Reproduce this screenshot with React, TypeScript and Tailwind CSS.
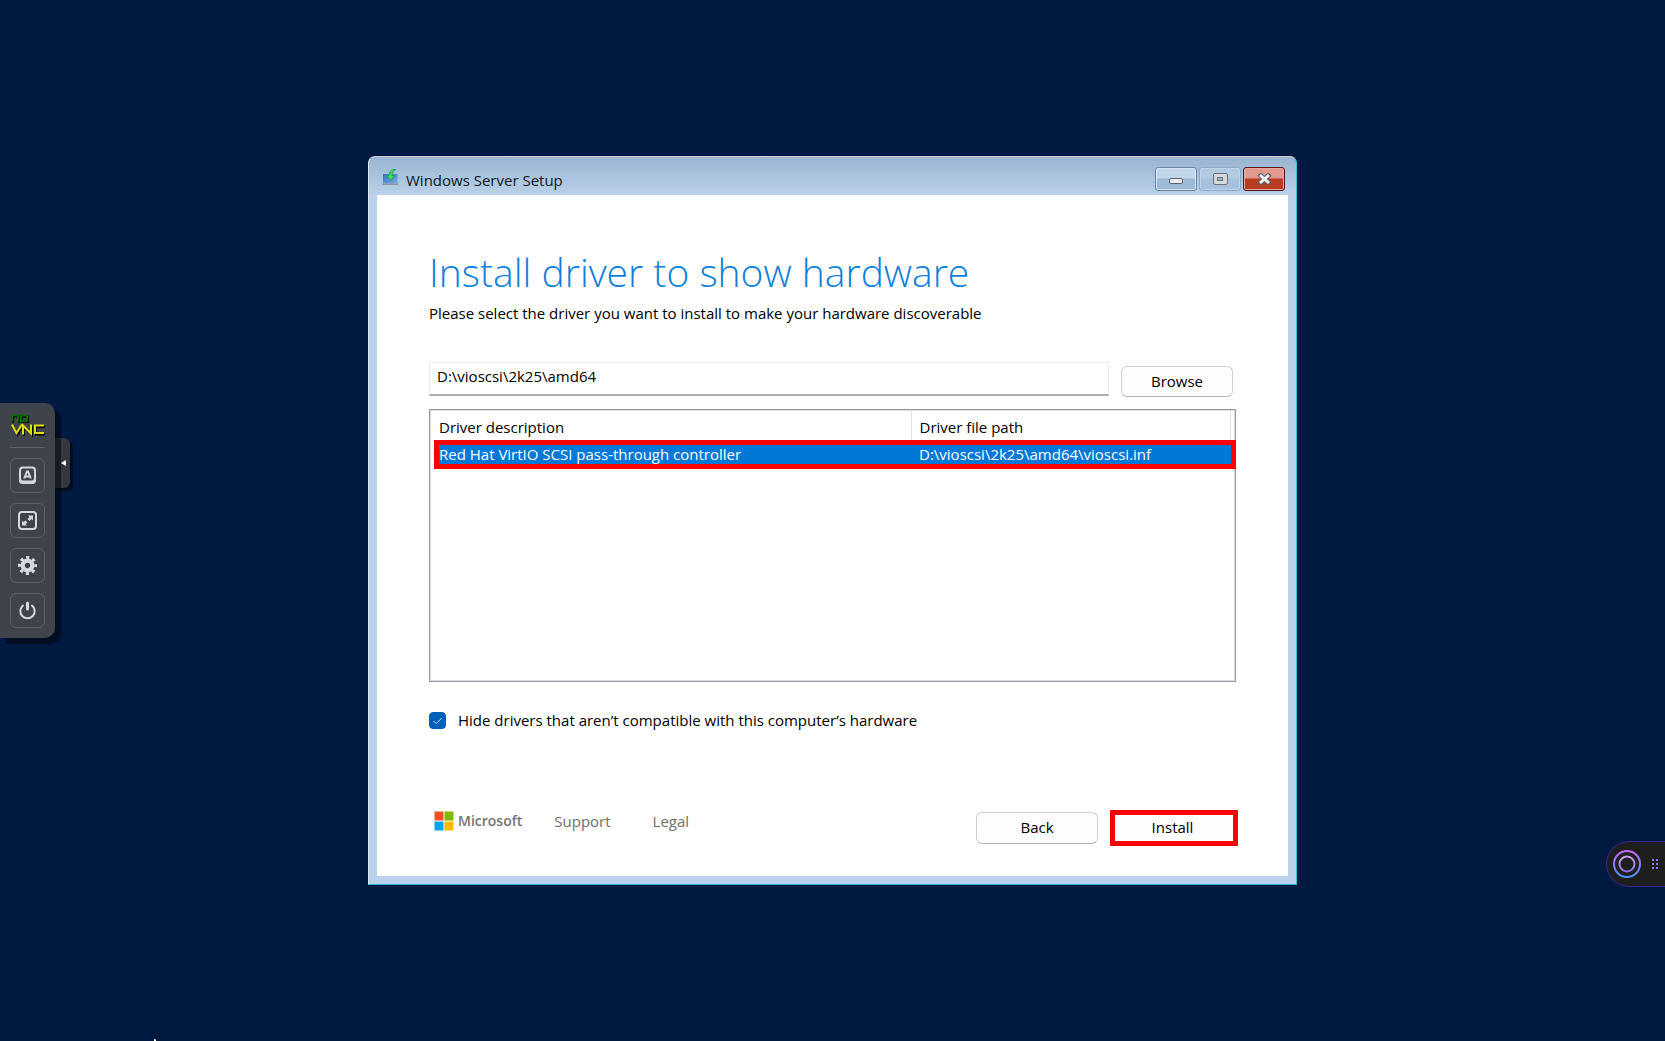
import type { ReactNode } from "react";

const drivers = [
  {
    description: "Red Hat VirtIO SCSI pass-through controller",
    path: "D:\\vioscsi\\2k25\\amd64\\vioscsi.inf",
  },
];

function VncButton({ label, children }: { label: string; children: ReactNode }) {
  return (
    <button
      type="button"
      aria-label={label}
      className="flex size-[35px] items-center justify-center rounded-md border border-[#5d6068]"
    >
      {children}
    </button>
  );
}

function VncBar() {
  return (
    <aside className="fixed top-1/2 left-0 flex -translate-y-1/2 items-start pb-px">
      <div className="relative z-10 flex flex-col items-center gap-[10px] rounded-r-[10px] bg-[#3f434c] p-[10px] shadow-[6px_6px_0_rgba(0,0,0,0.5)]">
        <svg width="35" height="24" viewBox="0 0 35 24" fill="none" role="img" aria-label="noVNC">
          <g strokeWidth="2">
            <path d="M3 10V3.500h6V10M12 3.500h6V9h-6z" stroke="#000" />
            <path d="M3 13l4.500 8.500L13 13M14 22.500V14l8 8v-9M35 14h-9v7.500h9" stroke="#000" />
            <path d="M2 9V2.500h6V9M11 2.500h6V8h-6z" stroke="#007000" />
            <path d="M2 11.500l4.500 8.500L12 11.500M13 21.500V12.500l8 8v-9M34 12.500h-9V20h9" stroke="#e0e010" />
          </g>
        </svg>
        <div className="h-px w-full bg-[#62656d]" />
        <VncButton label="Keyboard">
          <svg width="19" height="19" viewBox="0 0 19 19" fill="none">
            <rect x="2" y="1.500" width="15" height="14" rx="3" stroke="#d5d8e0" strokeWidth="2" />
            <path d="M1 13v1.500q0 3.500 3.500 3.500h10q3.500 0 3.500-3.500V13q-1 2-3 2H4q-2 0-3-2z" fill="#d5d8e0" />
            <path d="M6.200 12.500L9 5.500h1l2.800 7M7.500 10.500h4" stroke="#d5d8e0" strokeWidth="2" />
          </svg>
        </VncButton>
        <VncButton label="Fullscreen">
          <svg width="19" height="19" viewBox="0 0 19 19" fill="none">
            <rect x="1" y="1" width="17" height="17" rx="3" stroke="#d5d8e0" strokeWidth="2" />
            <path
              d="M10 4.500h5v5l-1.500-1.500-2 2-2-2 2-2zM9 14.500H4v-5L5.500 11l2-1.500 2 2-2 1.500z"
              fill="#d5d8e0"
            />
          </svg>
        </VncButton>
        <VncButton label="Settings">
          <svg width="19" height="19" viewBox="-9.500 -9.500 19 19" fill="none">
            <circle r="4.800" stroke="#d5d8e0" strokeWidth="4.200" />
            <circle r="8" stroke="#d5d8e0" strokeWidth="3" strokeDasharray="3.140 3.143" strokeDashoffset="1.570" />
          </svg>
        </VncButton>
        <VncButton label="Power">
          <svg width="19" height="19" viewBox="0 0 19 19" fill="none" stroke="#d5d8e0" strokeLinecap="round">
            <path d="M5 4.500a7.200 7.200 0 1 0 9 0" strokeWidth="2" />
            <path d="M9.500 2v6" strokeWidth="3" />
          </svg>
        </VncButton>
      </div>
      <button
        type="button"
        aria-label="Toggle control bar"
        className="mt-[35px] flex h-[50px] w-[15px] items-center justify-center rounded-r-md bg-[#33373f] pr-px pl-[3px] shadow-[3px_3px_0_rgba(0,0,0,0.5)]"
      >
        <svg width="6" height="6" viewBox="0 0 6 6">
          <path d="M5 0v6L0 3z" fill="#fff" />
        </svg>
      </button>
    </aside>
  );
}

function TitleBar() {
  return (
    <header className="flex h-[38px] items-center gap-[7px] pr-[3px] pl-[5px]">
      <svg className="mt-[2px]" width="17" height="17" viewBox="0 0 17 17">
        <defs>
          <linearGradient id="disk" x1="0" y1="0" x2="1" y2="1">
            <stop offset="0" stopColor="#3a6fc4" />
            <stop offset="1" stopColor="#79aee6" />
          </linearGradient>
        </defs>
        <path d="M1 5h14.500v9.500H1z" fill="url(#disk)" />
        <path d="M0 14.500h16.500V16H0z" fill="#8b96a2" />
        <path
          d="M13.500 0.500C9 0.500 7 3 7 6.500H4.500l4 5 4-5h-2.500C10 3.500 11 2 13.500 0.500z"
          fill="#35e05a"
          stroke="#159a3a"
          strokeWidth="0.800"
        />
      </svg>
      <h1 className="grow pt-2 text-[15px] text-[#101820]">Windows Server Setup</h1>
      <div className="flex gap-[2px] pt-[6px]">
        <button
          type="button"
          aria-label="Minimize"
          className="flex h-6 w-[42px] items-center justify-center rounded-[3px] border border-[#7384a3] bg-linear-to-b from-[#c3d5ea] from-45% to-[#9db9d8] to-50% shadow-[inset_0_0_0_1px_#d5e3f3]"
        >
          <span className="mt-1 h-[6px] w-[14px] rounded-[2px] border border-[#5e6270] bg-[#ececec]" />
        </button>
        <button
          type="button"
          aria-label="Maximize"
          className="flex h-6 w-[42px] items-center justify-center rounded-[3px] border border-[#8fa7c6] bg-linear-to-b from-[#b3cae3] from-45% to-[#a6c1df] to-50% shadow-[inset_0_0_0_1px_#bfd3ea]"
        >
          <span className="flex h-3 w-[15px] items-center justify-center rounded-[2px] border border-[#6c6f78] bg-[#d8d8d8]">
            <span className="h-1 w-[6px] border border-[#6c6f78] bg-[#9fbad8]" />
          </span>
        </button>
        <button
          type="button"
          aria-label="Close"
          className="flex h-6 w-[42px] items-center justify-center rounded-[3px] border border-[#5a1522] bg-linear-to-b from-[#e29a90] from-45% to-[#ba3c20] to-50% shadow-[inset_0_0_0_1px_#e6a9a0]"
        >
          <svg width="15" height="12" viewBox="0 0 15 12">
            <path d="M2 1l11 10M13 1l-11 10" stroke="#5d5f70" strokeWidth="5" />
            <path d="M3 2l9 8M12 2l-9 8" stroke="#f2f2f2" strokeWidth="3" />
          </svg>
        </button>
      </div>
    </header>
  );
}

function DriverTable() {
  return (
    <div className="mt-3 h-[273px] border border-[#989ba2] pr-1 pl-[9px] shadow-[inset_0_0_0_1px_#d9dade]">
      <table className="w-full border-collapse text-left">
        <thead>
          <tr className="h-[35px]">
            <th className="w-[472px] border-r border-[#e2e2e2] p-0 font-normal">Driver description</th>
            <th className="border-r border-[#e2e2e2] p-0 pl-2 font-normal">Driver file path</th>
          </tr>
        </thead>
        <tbody>
          {drivers.map((driver) => (
            <tr
              key={driver.path}
              className="h-[19px] bg-[#0078d7] leading-[19px] text-white outline-[5px] outline-[#ff0000]"
            >
              <td className="p-0">{driver.description}</td>
              <td className="p-0 pl-2">{driver.path}</td>
            </tr>
          ))}
        </tbody>
      </table>
    </div>
  );
}

function Footer() {
  return (
    <footer className="mt-auto flex items-start text-[#6e6e6e]">
      <div className="ml-[5px] flex grow items-center">
        <div className="mr-8 flex items-center gap-1">
          <svg width="20" height="20" viewBox="0 0 20 20">
            <path d="M0.500 0.500h9v9h-9z" fill="#f25022" />
            <path d="M10.500 0.500h9v9h-9z" fill="#7fba00" />
            <path d="M0.500 10.500h9v9h-9z" fill="#00a4ef" />
            <path d="M10.500 10.500h9v9h-9z" fill="#ffb900" />
          </svg>
          <span className="text-sm font-semibold text-[#737373]">Microsoft</span>
        </div>
        <a href="#support" className="mr-[42px]">
          Support
        </a>
        <a href="#legal">Legal</a>
      </div>
      <div className="flex items-center gap-3 text-black">
        <button
          type="button"
          className="h-8 w-[122px] rounded-md border border-[#cfcfcf] border-b-[#b8b8b8] bg-[#fdfdfd] pb-[2px]"
        >
          Back
        </button>
        <button
          type="button"
          className="-mr-[2px] h-9 w-32 border-[5px] border-[#ff0000] bg-[#fdfdfd] pr-[3px] pb-[2px]"
        >
          Install
        </button>
      </div>
    </footer>
  );
}

function SetupWindow() {
  return (
    <section className="flex min-h-[729px] w-full max-w-[929px] flex-col rounded-t-[7px] border border-t-[#c9cbd2] border-r-[#2fc3d9] border-b-[#2fb5cb] border-l-[#dfe7f0] bg-[#b9d1ea] bg-linear-to-b from-[#99b4d1] via-[#b9d1ea] via-[38px] to-[#b9d1ea] px-2 pb-2">
      <TitleBar />
      <div className="flex grow flex-col bg-white px-[52px] pb-[30px] text-[15px] text-black">
        <h2 className="mt-[49px] text-[39px] leading-[56px] font-light text-[#0f7fdc]">
          Install driver to show hardware
        </h2>
        <p className="leading-[26px]">
          Please select the driver you want to install to make your hardware discoverable
        </p>
        <div className="mt-[36px] flex items-start gap-3">
          <input
            type="text"
            aria-label="Driver location"
            defaultValue={"D:\\vioscsi\\2k25\\amd64"}
            className="h-[34px] grow border border-b-2 border-[#ececec] border-b-[#adadad] px-[7px] pb-[6px] outline-none"
          />
          <button
            type="button"
            className="mt-1 mr-[3px] h-[31px] w-28 rounded-md border border-[#cfcfcf] border-b-[#b8b8b8] bg-[#fdfdfd] pb-px"
          >
            Browse
          </button>
        </div>
        <DriverTable />
        <label className="mt-[27px] flex items-center gap-3">
          <span className="relative flex size-[17px]">
            <input
              type="checkbox"
              defaultChecked
              className="peer size-full appearance-none rounded-[4px] border border-[#005fb8] checked:bg-[#005fb8]"
            />
            <svg className="pointer-events-none absolute inset-0" width="17" height="17" viewBox="0 0 17 17" fill="none">
              <path d="M4.500 9l2.700 2.700 5.500-5.700" stroke="#c5dcf2" />
            </svg>
          </span>
          Hide drivers that aren’t compatible with this computer’s hardware
        </label>
        <Footer />
      </div>
    </section>
  );
}

function AssistantTab() {
  return (
    <button
      type="button"
      aria-label="Assistant"
      className="fixed top-[841px] right-0 flex h-[46px] w-[59px] items-center gap-[11px] rounded-l-full border border-r-0 border-[#3f2585] bg-[#1e1e1e] pl-[6px]"
    >
      <svg width="28" height="28" viewBox="0 0 28 28" fill="none" strokeWidth="2">
        <defs>
          <linearGradient id="ring" x1="0" y1="0" x2="0" y2="1">
            <stop offset="0" stopColor="#c766ff" />
            <stop offset="1" stopColor="#4a93ff" />
          </linearGradient>
          <linearGradient id="core" x1="0" y1="0" x2="0" y2="1">
            <stop offset="0" stopColor="#c9a0e8" />
            <stop offset="1" stopColor="#8a6fe0" />
          </linearGradient>
        </defs>
        <circle cx="14" cy="14" r="13" stroke="url(#ring)" />
        <circle cx="14" cy="14" r="7.500" stroke="url(#core)" />
      </svg>
      <svg width="6" height="10" viewBox="0 0 6 10" fill="#8f78e8">
        <path d="M0 0h2v2H0zM4 0h2v2H4zM0 4h2v2H0zM4 4h2v2H4zM0 8h2v2H0zM4 8h2v2H4z" />
      </svg>
    </button>
  );
}

// Tip of the remote pointer, parked at the bottom edge of the screen.
function PointerTip() {
  return (
    <svg className="fixed bottom-0 left-[154px]" width="2" height="2" viewBox="0 0 2 2">
      <path d="M0 0h1l1 1v1H0z" fill="#fff" />
    </svg>
  );
}

export default function App() {
  return (
    <main className="flex min-h-screen items-center justify-center bg-[#001940] font-['Open_Sans',sans-serif]">
      <VncBar />
      <SetupWindow />
      <AssistantTab />
      <PointerTip />
    </main>
  );
}
